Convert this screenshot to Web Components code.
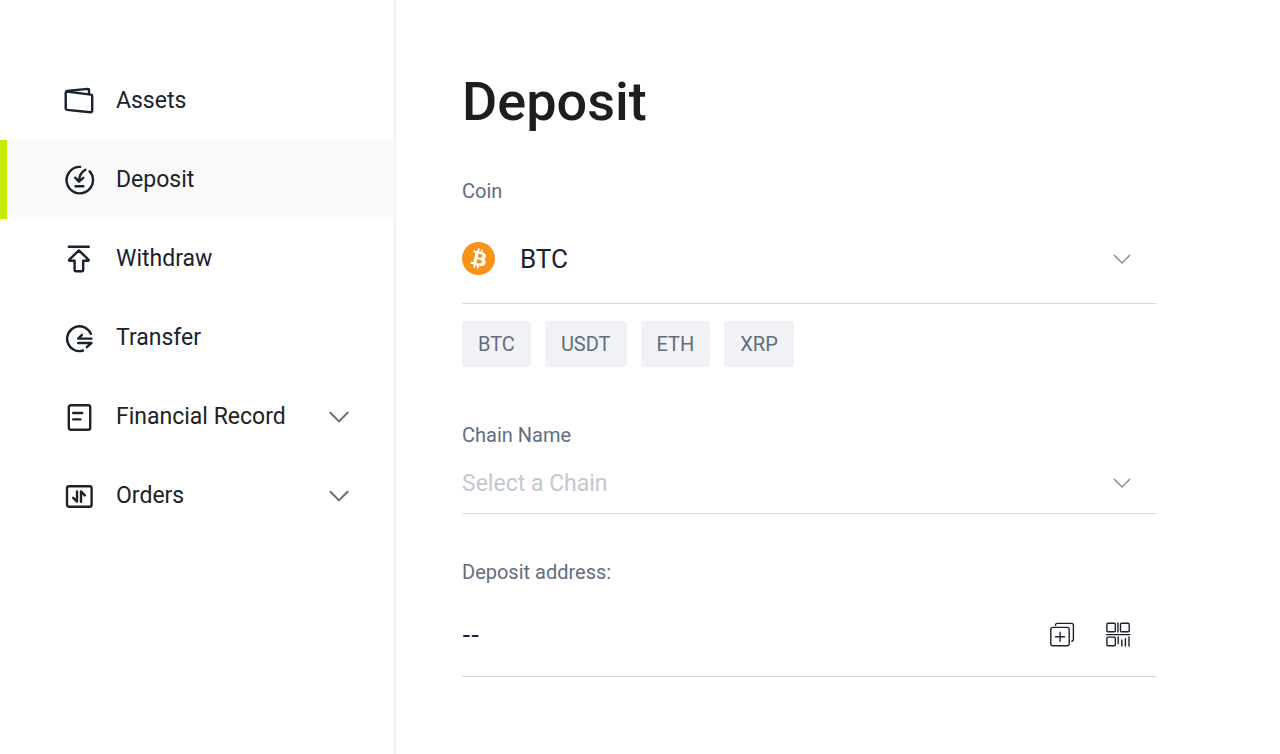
<!DOCTYPE html>
<html lang="en">
<head>
<meta charset="utf-8">
<meta name="viewport" content="width=device-width, initial-scale=1">
<title>Deposit</title>
<style>
  body { margin: 0; background: #fff; color: #1a222e; font-family: Roboto, "Noto Sans", sans-serif; }
</style>
</head>
<body>
<deposit-app></deposit-app>
<script>
const icons = {
  assets: ['0 0 32 32', '<path d="M2.9 6.2Q1.7 6.3 1.7 7.5V23.6Q1.7 24.8 3 24.9L26.4 27.2Q28.2 27.3 28.2 25.8V10.9Q28.2 9.7 27 9.6L2.9 6.6Z"/><path d="M3 6L23.8 3.9Q25 3.8 25 5V9"/>'],
  deposit: ['0 0 32 32', '<path d="M16.2 2.9A13.2 13.2 0 1 0 25.6 7.3"/><path d="M21.4 5.8C17.4 8 15.2 11.6 15.1 17M11.2 13.7L15 17.7L19.2 13.8M11.5 22.2H19.4"/>'],
  withdraw: ['0 0 32 32', '<path d="M4.8 3.7H24.8M14.9 7.4L24.7 16.8Q25 17.8 24 17.8H19.2V27Q19.2 28.2 18.2 28.2H11.6Q10.6 28.2 10.6 27V17.8H5.8Q4.8 17.8 5.1 16.8Z"/>'],
  transfer: ['0 0 32 32', '<path d="M26.9 11.9A12.4 12.4 0 1 0 19 28.6M27.4 16.6H14.2L18 12.8M14.2 21H27.4L22.8 25.2"/>'],
  record: ['0 0 32 32', '<rect x="4.8" y="4.2" width="21.4" height="24.6" rx="2"/><path d="M9.2 12H18.2M9.2 18.4H16.4"/>'],
  orders: ['0 0 32 32', '<rect x="3" y="6.2" width="24.6" height="20.6" rx="2"/><path d="M13 11.4V21.6L9.2 17.8M17 21.8V11.4L20.8 15.4"/>'],
  down: ['0 0 20 20', '<path d="M1.4 5.8L10 14.4L18.6 5.8"/>'],
  copy: ['0 0 26 26', '<rect x="1.8" y="6.4" width="18.4" height="18.4" rx="2"/><path d="M6.5 4.2Q6.5 2.4 8.3 2.4H22.4Q24.4 2.4 24.4 4.4V18.4Q24.4 20.2 22.8 20.2M11.1 11.2V20.2M6.6 15.7H15.6"/>'],
  qr: ['0 0 26 26', '<rect x="1.9" y="2.3" width="8.4" height="8.4" rx="1"/><rect x="15.5" y="2.3" width="8.7" height="8.4" rx="1"/><rect x="1.9" y="16.1" width="8.4" height="8.6" rx="1"/><path d="M12.9 2V11M1.5 13.6H24.6M13.2 16V22.5M16.8 19V25M20.4 17.6V25M24 16V25"/>'],
  bitcoin: ['0 0 32 32', '<circle cx="16" cy="16" r="16" fill="#f7931a" stroke="none"/><path fill="#fff" stroke="none" fill-rule="evenodd" d="M23.189 14.02c.314-2.096-1.283-3.223-3.465-3.975l.708-2.84-1.728-.43-.69 2.765c-.454-.114-.92-.22-1.385-.326l.695-2.783L15.596 6l-.708 2.839c-.376-.086-.746-.17-1.104-.26l.002-.009-2.384-.595-.46 1.846s1.283.294 1.256.312c.7.175.826.638.805 1.006l-.806 3.235c.048.012.11.03.18.057l-.183-.045-1.13 4.532c-.086.212-.303.531-.793.41.018.025-1.256-.313-1.256-.313l-.858 1.978 2.25.561c.418.105.828.215 1.231.318l-.715 2.872 1.727.43.708-2.84c.472.127.93.245 1.378.357l-.706 2.828 1.728.43.715-2.866c2.948.558 5.164.333 6.097-2.333.752-2.146-.037-3.385-1.588-4.192 1.13-.26 1.98-1.003 2.207-2.538zm-3.95 5.538c-.533 2.147-4.148.986-5.32.695l.95-3.805c1.172.293 4.929.872 4.37 3.11zm.535-5.569c-.487 1.953-3.495.96-4.47.717l.86-3.45c.975.243 4.118.696 3.61 2.733z"/>']
};

class ShadowElement extends HTMLElement {
  connectedCallback() {
    if (this.shadowRoot) return;
    const template = document.createElement('template');
    template.innerHTML = this.render();
    this.attachShadow({ mode: 'open' }).append(template.content.cloneNode(true));
  }
  attr(name, fallback = '') { return this.getAttribute(name) ?? fallback; }
}

customElements.define('ui-icon', class extends ShadowElement {
  render() {
    const [box, body] = icons[this.attr('name')];
    return `<style>
      :host { display: block; flex: none; width: 32px; height: 32px; }
      svg { display: block; width: 100%; height: 100%; fill: none; stroke: currentColor; stroke-width: var(--stroke, 2.4); stroke-linecap: round; stroke-linejoin: round; }
    </style><svg viewBox="${box}" aria-hidden="true">${body}</svg>`;
  }
});

customElements.define('nav-item', class extends ShadowElement {
  render() {
    const group = this.hasAttribute('group');
    const tag = group ? 'button type="button" aria-expanded="false"' : 'a href="#' + this.attr('icon') + '"';
    return `<style>
      :host { display: block; }
      a, button { box-sizing: border-box; display: flex; align-items: center; gap: 20px; width: 100%; height: 79px; margin: 0; padding: 0 45px 0 57px; border: 0 solid transparent; border-left-width: 7px; background: none; color: inherit; font: 23px/35px Roboto, sans-serif; text-align: left; text-decoration: none; cursor: pointer; }
      :host([group]) { color: #222; }
      :host([active]) a { border-left-color: #c3ec08; background: #fafafa; }
      .text { flex: 1; white-space: nowrap; }
      .arrow { width: 20px; height: 20px; color: #626d80; --stroke: 2; }
    </style>
    <${tag}><ui-icon name="${this.attr('icon')}"></ui-icon><span class="text"><slot></slot></span>${group ? '<ui-icon class="arrow" name="down"></ui-icon>' : ''}</${group ? 'button' : 'a'}>`;
  }
});

customElements.define('side-nav', class extends ShadowElement {
  render() {
    return `<style>
      :host { box-sizing: border-box; display: block; flex: none; width: 396px; padding-top: 61px; border-right: 2px solid #f2f2f3; }
    </style><nav aria-label="Account"><slot></slot></nav>`;
  }
});

customElements.define('select-field', class extends ShadowElement {
  render() {
    const options = this.attr('options').split(',').map(o => `<option>${o}</option>`).join('');
    return `<style>
      :host { display: block; }
      label { display: block; color: #626d80; font-size: 20px; line-height: 24px; }
      .row { display: grid; align-items: center; height: 60px; margin-top: 6px; border-bottom: 1px solid #d9dadd; }
      .row > * { grid-area: 1 / 1; }
      select { appearance: none; width: 100%; height: 100%; margin: 0; padding: 2px 0 0; border: 0; background: none; color: #c3c8d0; font: 23px/32px Roboto, sans-serif; cursor: pointer; }
      .arrow { justify-self: end; width: 18px; height: 18px; margin-right: 25px; color: #808080; pointer-events: none; --stroke: 1.4; }
      .coin { width: 33px; height: 33px; pointer-events: none; }
      :host([coin]) .row { height: 89px; margin-top: 11px; }
      :host([coin]) select { padding: 0 0 0 58px; color: #1a222e; font-size: 26px; }
    </style>
    <label for="choice">${this.attr('label')}</label>
    <div class="row">
      <select id="choice">${options}</select>
      ${this.hasAttribute('coin') ? '<ui-icon class="coin" name="bitcoin"></ui-icon>' : ''}
      <ui-icon class="arrow" name="down"></ui-icon>
    </div>`;
  }
});

customElements.define('coin-chip', class extends ShadowElement {
  render() {
    return `<style>
      :host { display: block; }
      button { height: 46px; margin: 0; padding: 0 16px; border: 0; border-radius: 3px; background: #f1f2f6; color: #626d80; font: 20px/24px Roboto, sans-serif; cursor: pointer; }
    </style><button type="button"><slot></slot></button>`;
  }
});

customElements.define('address-field', class extends ShadowElement {
  render() {
    return `<style>
      :host { display: block; }
      label { display: block; color: #626d80; font-size: 20px; line-height: 24px; }
      .row { display: flex; align-items: center; gap: 30px; height: 85px; margin-top: 7px; padding-right: 25px; border-bottom: 1px solid #d6d6df; }
      output { flex: 1; font-family: "Liberation Sans", sans-serif; font-size: 26px; line-height: 32px; }
      button { margin: 0; padding: 0; border: 0; background: none; color: #1a222e; cursor: pointer; }
      ui-icon { width: 26px; height: 26px; --stroke: 1.4; }
    </style>
    <label for="address">Deposit address:</label>
    <div class="row">
      <output id="address"><slot></slot></output>
      <button type="button" aria-label="Copy address"><ui-icon name="copy"></ui-icon></button>
      <button type="button" aria-label="Show QR code"><ui-icon name="qr"></ui-icon></button>
    </div>`;
  }
});

customElements.define('deposit-app', class extends ShadowElement {
  render() {
    return `<style>
      :host { display: flex; min-height: 100vh; }
      main { flex: 1; min-width: 0; padding: 66px 124px 66px 66px; }
      h1 { margin: 0 0 41px; color: #1e1e1e; font-size: 54px; line-height: 72px; font-weight: 500; }
      .chips { display: flex; flex-wrap: wrap; gap: 14px; margin: 17px 0 56px; }
      address-field { margin-top: 46px; }
    </style>
    <side-nav>
      <nav-item icon="assets">Assets</nav-item>
      <nav-item icon="deposit" active>Deposit</nav-item>
      <nav-item icon="withdraw">Withdraw</nav-item>
      <nav-item icon="transfer">Transfer</nav-item>
      <nav-item icon="record" group>Financial Record</nav-item>
      <nav-item icon="orders" group>Orders</nav-item>
    </side-nav>
    <main>
      <h1>Deposit</h1>
      <select-field label="Coin" options="BTC,USDT,ETH,XRP" coin></select-field>
      <div class="chips">
        <coin-chip>BTC</coin-chip><coin-chip>USDT</coin-chip><coin-chip>ETH</coin-chip><coin-chip>XRP</coin-chip>
      </div>
      <select-field label="Chain Name" options="Select a Chain"></select-field>
      <address-field>--</address-field>
    </main>`;
  }
});
</script>
</body>
</html>
